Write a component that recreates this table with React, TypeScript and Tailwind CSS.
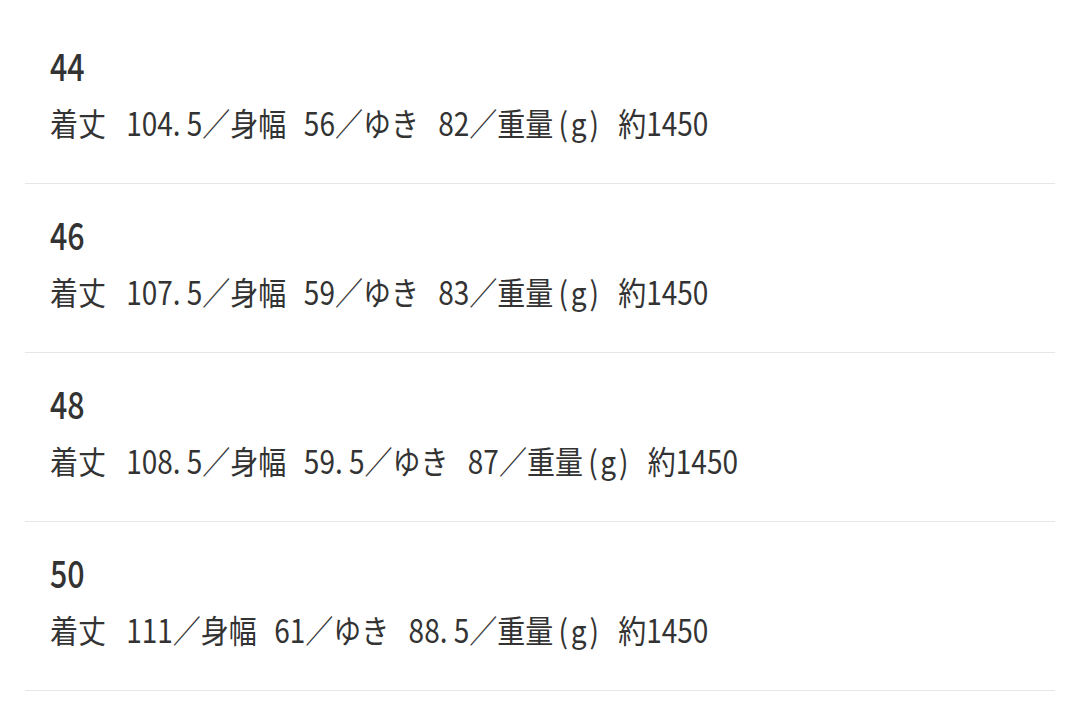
import React from "react";

type Row = { size: string; a: string; b: string; c: string; d: string };

const rows: Row[] = [
  { size: "44", a: "104. 5／身幅", b: "56／ゆき", c: "82／重量", d: "約1450" },
  { size: "46", a: "107. 5／身幅", b: "59／ゆき", c: "83／重量", d: "約1450" },
  { size: "48", a: "108. 5／身幅", b: "59. 5／ゆき", c: "87／重量", d: "約1450" },
  { size: "50", a: "111／身幅", b: "61／ゆき", c: "88. 5／重量", d: "約1450" },
];

export default function App() {
  return (
    <div
      className="min-h-[728px] w-[1080px] bg-white px-[25px] pt-[15px] text-[#333333]"
      style={{ fontFamily: '"Noto Sans CJK JP", "Noto Sans", sans-serif' }}
    >
      {rows.map((r) => (
        <div key={r.size} className="border-b border-[#e6e6e6] px-[25px] pt-[30px] pb-[41px]">
          <div className="h-[40px] origin-left scale-x-[0.8] text-[38px] leading-[40px] font-medium">
            {r.size}
          </div>
          <div className="mt-[17px] flex h-[40px] origin-left scale-x-[0.875] whitespace-nowrap text-[32px] leading-[40px]">
            <span>着丈</span>
            <span className="ml-[23px]">{r.a}</span>
            <span className="ml-[20px]">{r.b}</span>
            <span className="ml-[22px]">{r.c}</span>
            <span className="ml-[6px] tracking-[3px]">(g)</span>
            <span className="ml-[19px]">{r.d}</span>
          </div>
        </div>
      ))}
    </div>
  );
}
